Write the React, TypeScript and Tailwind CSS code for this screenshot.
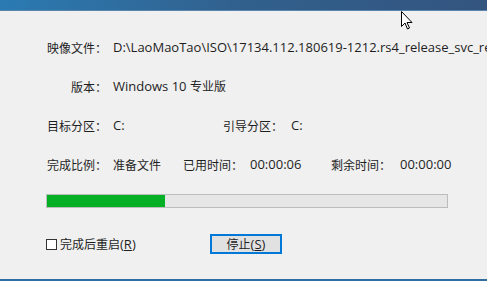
import React from "react";

const cjk = { fontFamily: '"Noto Sans CJK SC", sans-serif' };
const latin = { fontFamily: '"Open Sans", "Noto Sans CJK SC", sans-serif' };

const Cursor = () => (
  <svg
    className="absolute left-[401px] top-[11px]"
    width="12"
    height="19"
    viewBox="0 0 12 19"
  >
    <path
      d="M0.5 0.5 L0.5 15.5 L4 12 L6.5 18 L8.5 17 L6 11.5 L11 11.5 Z"
      fill="#ffffff"
      stroke="#000000"
      strokeWidth="1"
      strokeLinejoin="miter"
    />
  </svg>
);

const Val = ({ children, className = "" }: { children: React.ReactNode; className?: string }) => (
  <div className={`shrink-0 text-[13px] whitespace-nowrap ${className}`} style={latin}>
    {children}
  </div>
);

export default function App() {
  return (
    <div
      className="relative w-[487px] h-[281px] overflow-hidden bg-[#f0f0f0] text-[12px] text-[#1e1e1e] leading-none"
      style={cjk}
    >
      {/* title bar */}
      <div className="h-[11px] bg-gradient-to-r from-[#2a7bb2] via-[#31608d] to-[#33557f] border-b border-[#5a86ad]" />

      <div className="flex flex-col pt-[17px]">
        <div className="h-[39px] flex items-center">
          <div className="shrink-0 w-[107px] text-right">映像文件：</div>
          <Val className="ml-[6px]">
            D:\LaoMaoTao\ISO\17134.112.180619-1212.rs4_release_svc_refresh
          </Val>
        </div>
        <div className="h-[39px] flex items-center">
          <div className="shrink-0 w-[107px] text-right">版本：</div>
          <Val className="ml-[6px]">
            Windows 10 <span className="text-[12px]" style={cjk}>专业版</span>
          </Val>
        </div>
        <div className="h-[39px] flex items-center">
          <div className="shrink-0 w-[107px] text-right">目标分区：</div>
          <Val className="ml-[6px] w-[110px]">C:</Val>
          <div className="shrink-0 w-[60px]">引导分区：</div>
          <Val className="ml-[8px]">C:</Val>
        </div>
        <div className="h-[39px] flex items-center">
          <div className="shrink-0 w-[107px] text-right">完成比例：</div>
          <div className="shrink-0 ml-[6px] w-[70px]">准备文件</div>
          <div className="shrink-0 w-[60px]">已用时间：</div>
          <Val className="ml-[7px] w-[81px]">00:00:06</Val>
          <div className="shrink-0 w-[60px]">剩余时间：</div>
          <Val className="ml-[9px]">00:00:00</Val>
        </div>

        {/* progress */}
        <div className="mt-[10px] ml-[46px] w-[402px] h-[14px] border border-[#bcbcbc] bg-[#e6e6e6]">
          <div className="h-full w-[118px] bg-[#06b025]" />
        </div>

        <div className="mt-[26px] h-[20px] flex items-center">
          <label className="ml-[46px] flex items-center w-[164px]">
            <span className="w-[11px] h-[11px] border border-[#333333] bg-white" />
            <span className="ml-[3px]">
              完成后重启<span style={latin} className="text-[13px]">(<span className="underline">R</span>)</span>
            </span>
          </label>
          <button className="w-[72px] h-[20px] border-2 border-[#0078d7] bg-[#e1e1e1] flex items-center justify-center text-[12px] text-[#1e1e1e]">
            停止<span style={latin} className="text-[13px]">(<span className="underline">S</span>)</span>
          </button>
        </div>
      </div>

      {/* bottom edge */}
      <div className="absolute left-0 bottom-0 w-full h-[2px] bg-[#2f6da3]" />

      <Cursor />
    </div>
  );
}
